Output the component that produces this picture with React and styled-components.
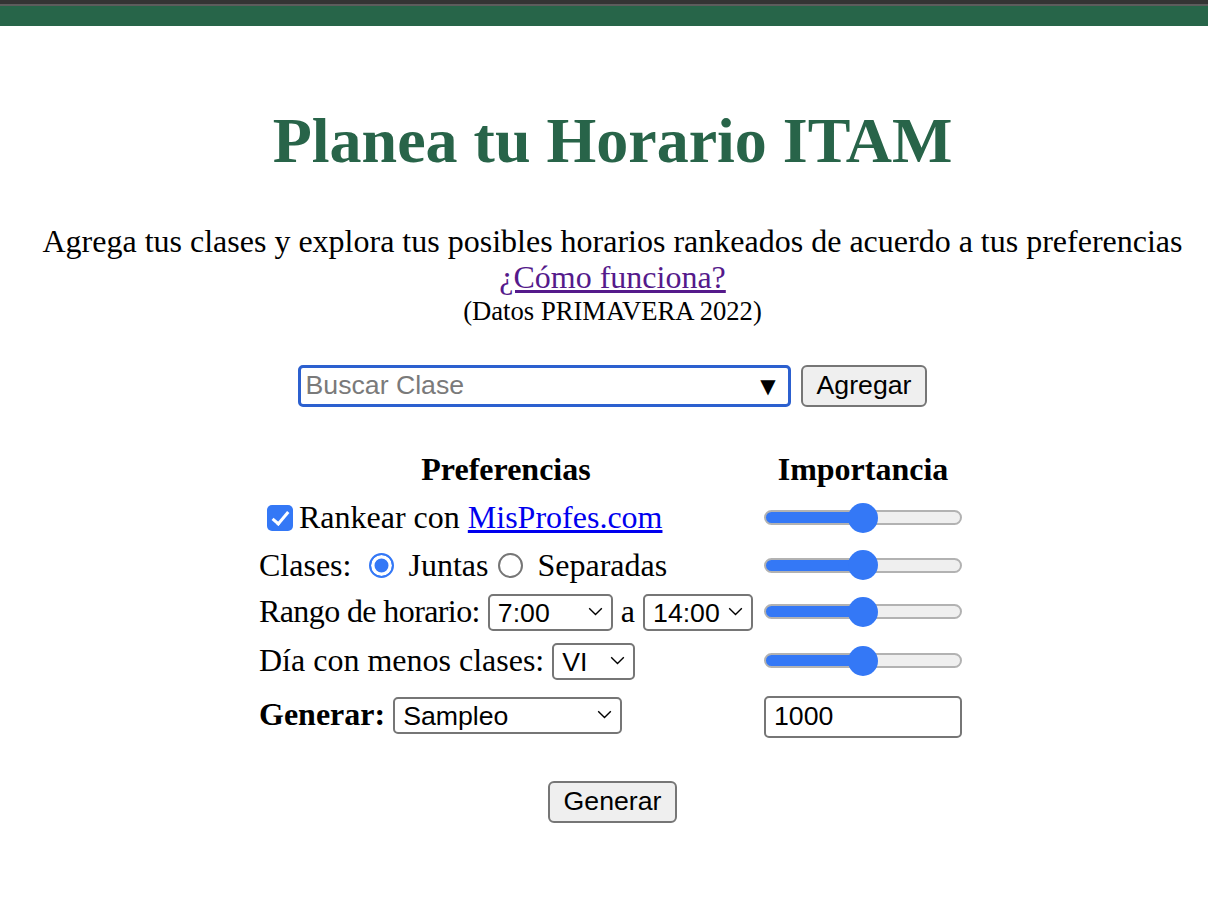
import React from "react";
import styled, { createGlobalStyle } from "styled-components";

const GlobalStyle = createGlobalStyle`
  html, body { margin: 0; padding: 0; background: #ffffff; }
  body { font-family: "Liberation Serif", "Times New Roman", serif; font-size: 32px; color: #000; }
  * { box-sizing: border-box; }
`;

const TopBar = styled.header`
  height: 26px;
  background: #276549;
  border-top: 4px solid #343434;
  box-shadow: inset 0 2px 0 #5c5c5c;
`;

const Main = styled.main`
  display: flex;
  flex-direction: column;
  align-items: center;
  text-align: center;
  padding-left: 17px;
`;

const Title = styled.h1`
  margin: 78px 0 45px;
  font-size: 64px;
  font-weight: bold;
  line-height: 73.6px;
  color: #286449;
`;

const Intro = styled.p`
  margin: 0;
  font-size: 32px;
  line-height: 36.8px;
`;

const HelpLink = styled.a`
  color: #551a8b;
  text-decoration: underline;
`;

const Season = styled.div`
  font-size: 26.67px;
  line-height: 30.7px;
`;

const SearchRow = styled.div`
  display: flex;
  align-items: center;
  gap: 10px;
  margin-top: 38px;
`;

const SearchBox = styled.div`
  width: 493px;
  height: 42px;
  display: flex;
  align-items: center;
  border: 3px solid #2c60cf;
  border-radius: 5px;
  padding: 0 12px 0 5px;
  background: #fff;
`;

const SearchInput = styled.input`
  flex: 1;
  border: none;
  outline: none;
  padding: 0;
  font-family: "Liberation Sans", Arial, sans-serif;
  font-size: 26.67px;
  color: #000;
  background: transparent;
  &::placeholder { color: #7a7a7a; }
`;

const Caret = styled.span`
  font-family: "DejaVu Sans", "Liberation Sans", sans-serif;
  font-size: 20px;
  color: #000;
`;

const Button = styled.button`
  height: 42px;
  padding: 0 14px;
  background: #efefef;
  border: 2px solid #767676;
  border-radius: 6px;
  font-family: "Liberation Sans", Arial, sans-serif;
  font-size: 26.67px;
  color: #000;
`;

const PrefGrid = styled.div`
  display: grid;
  grid-template-columns: 494px 198px;
  grid-template-rows: 48px 48px 47px 46px 52px 56px;
  column-gap: 11px;
  align-items: center;
  margin-top: 39px;
  padding-right: 4px;
  text-align: left;
`;

const HeadCell = styled.div`
  font-weight: bold;
  text-align: center;
  line-height: 36.8px;
`;

const Cell = styled.div`
  white-space: nowrap;
  line-height: 36.8px;
`;

const Label = styled.span`
  letter-spacing: ${(p) => p.$ls || 0}px;
`;

const Bold = styled.b`
  font-weight: bold;
`;

const MisProfes = styled.a`
  color: #0000ee;
  text-decoration: underline;
`;

const Check = styled.input.attrs({ type: "checkbox" })`
  appearance: none;
  position: relative;
  width: 26px;
  height: 26px;
  margin: 0 6px 0 8px;
  border-radius: 5px;
  background: #3478f6;
  vertical-align: -3px;
  &::after {
    content: "";
    position: absolute;
    left: 9px;
    top: 3px;
    width: 6px;
    height: 14px;
    border: solid #fff;
    border-width: 0 3.5px 3.5px 0;
    transform: rotate(40deg);
  }
`;

const Radio = styled.input.attrs({ type: "radio" })`
  appearance: none;
  width: 25px;
  height: 25px;
  margin: 0 6px 0 10px;
  border-radius: 50%;
  border: 2px solid #767676;
  background: #fff;
  vertical-align: -2px;
  &:checked {
    border: 2.5px solid #3478f6;
    background: #3478f6;
    box-shadow: inset 0 0 0 3.5px #fff;
  }
`;

const SelectWrap = styled.span`
  position: relative;
  display: inline-block;
  vertical-align: baseline;
`;

const Select = styled.select`
  appearance: none;
  width: ${(p) => p.$w}px;
  height: 37px;
  padding: 0 0 0 8px;
  border: 2px solid #767676;
  border-radius: 5px;
  background: #fff;
  font-family: "Liberation Sans", Arial, sans-serif;
  font-size: 26.67px;
  color: #000;
`;

const Chevron = styled.svg`
  position: absolute;
  right: 10px;
  top: 50%;
  width: 15px;
  height: 9px;
  margin-top: -5px;
  pointer-events: none;
`;

const Range = styled.input.attrs({ type: "range" })`
  appearance: none;
  -webkit-appearance: none;
  width: 198px;
  height: 31px;
  margin: 0;
  background: transparent;
  &::-webkit-slider-runnable-track {
    height: 15px;
    border-radius: 8px;
    border: 2px solid #b2b2b2;
    background: linear-gradient(to right, #3478f6 0, #3478f6 50%, #efefef 50%);
  }
  &::-webkit-slider-thumb {
    -webkit-appearance: none;
    width: 30px;
    height: 30px;
    margin-top: -9.5px;
    border-radius: 50%;
    background: #3478f6;
    border: none;
  }
`;

const NumberInput = styled.input`
  width: 198px;
  height: 42px;
  margin-top: 4px;
  padding: 0 8px;
  border: 2px solid #767676;
  border-radius: 5px;
  font-family: "Liberation Sans", Arial, sans-serif;
  font-size: 26.67px;
  color: #000;
`;

const GenerateRow = styled.div`
  margin-top: 38px;
`;

function Dropdown({ width, options, defaultValue }) {
  return (
    <SelectWrap>
      <Select $w={width} defaultValue={defaultValue}>
        {options.map((o) => (
          <option key={o}>{o}</option>
        ))}
      </Select>
      <Chevron viewBox="0 0 15 9">
        <path d="M1.2 1.2 L7.5 7.5 L13.8 1.2" fill="none" stroke="#000" strokeWidth="1.4" />
      </Chevron>
    </SelectWrap>
  );
}

const hours = ["7:00", "8:00", "9:00", "10:00", "11:00", "12:00", "13:00", "14:00", "15:00", "16:00", "17:00", "18:00", "19:00", "20:00", "21:00", "22:00"];

export default function App() {
  return (
    <>
      <GlobalStyle />
      <TopBar />
      <Main>
        <Title>Planea tu Horario ITAM</Title>
        <Intro>
          Agrega tus clases y explora tus posibles horarios rankeados de acuerdo a tus preferencias
          <br />
          <HelpLink href="#">¿Cómo funciona?</HelpLink>
        </Intro>
        <Season>(Datos PRIMAVERA 2022)</Season>
        <SearchRow>
          <SearchBox>
            <SearchInput placeholder="Buscar Clase" />
            <Caret>▼</Caret>
          </SearchBox>
          <Button>Agregar</Button>
        </SearchRow>
        <PrefGrid>
          <HeadCell>Preferencias</HeadCell>
          <HeadCell>Importancia</HeadCell>

          <Cell>
            <Check defaultChecked />Rankear con <MisProfes href="#">MisProfes.com</MisProfes>
          </Cell>
          <Range defaultValue={50} />

          <Cell>
            Clases: <Radio name="clases" defaultChecked /> Juntas<Radio name="clases" /> Separadas
          </Cell>
          <Range defaultValue={50} />

          <Cell>
            <Label $ls={-0.6}>Rango de horario:</Label> <Dropdown width={125} options={hours} defaultValue="7:00" /> a{" "}
            <Dropdown width={110} options={hours} defaultValue="14:00" />
          </Cell>
          <Range defaultValue={50} />

          <Cell>
            Día con menos clases: <Dropdown width={83} options={["LU", "MA", "MI", "JU", "VI", "SA"]} defaultValue="VI" />
          </Cell>
          <Range defaultValue={50} />

          <Cell>
            <Bold>Generar:</Bold> <Dropdown width={229} options={["Sampleo", "Completo"]} defaultValue="Sampleo" />
          </Cell>
          <NumberInput type="text" defaultValue="1000" />
        </PrefGrid>
        <GenerateRow>
          <Button>Generar</Button>
        </GenerateRow>
      </Main>
    </>
  );
}
